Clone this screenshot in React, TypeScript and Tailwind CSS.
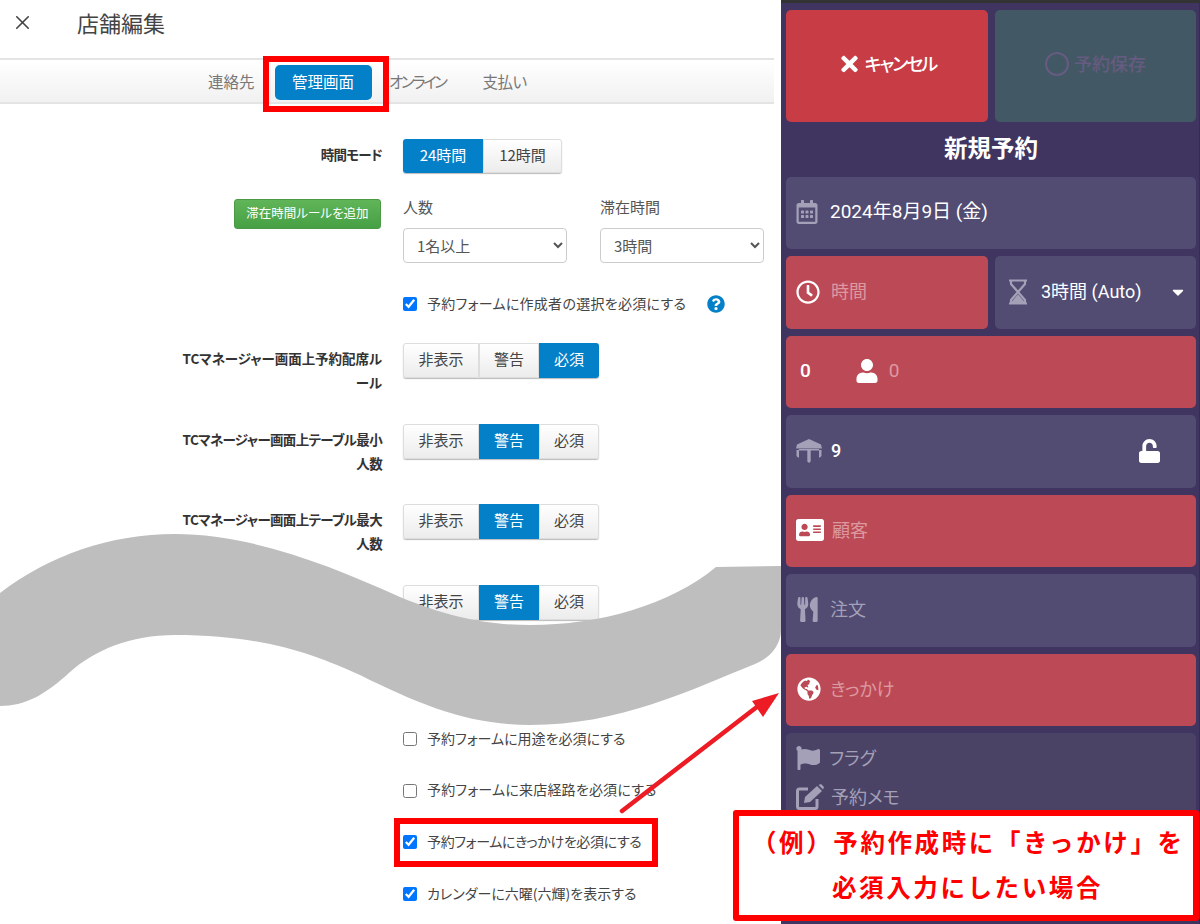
import {
  FaAddressCard,
  FaCaretDown,
  FaFlag,
  FaGlobeAmericas,
  FaQuestionCircle,
  FaRegCalendarAlt,
  FaRegClock,
  FaTimes,
  FaUnlock,
  FaUser,
  FaUtensils,
} from 'react-icons/fa';
import { X } from 'lucide-react';
import type { ReactNode } from 'react';

const OPTIONS = ['非表示', '警告', '必須'];

function Segmented({ active }: { active: number }) {
  return (
    <div className="flex h-[35px] w-[196px] rounded-[3px] text-[15px] shadow-[0_1px_1px_#bbb]">
      {OPTIONS.map((label, i) => (
        <div
          key={label}
          className={
            (i === 0 ? 'w-[76px] rounded-l-[3px] ' : i === 1 ? 'w-[60px] ' : 'w-[60px] rounded-r-[3px] ') +
            (i === active
              ? 'bg-[#0380c8] text-white '
              : 'border border-[#ddd] bg-gradient-to-b from-white to-[#ececec] text-[#444] ') +
            'flex items-center justify-center pb-[2px]'
          }
        >
          {label}
        </div>
      ))}
    </div>
  );
}

function RuleRow({ lines, active, tracking }: { lines: string[]; active: number; tracking?: string }) {
  return (
    <div className="flex h-[80.5px] gap-[21px]">
      <div className={'w-[200px] whitespace-nowrap pt-[3px] text-right text-[13.5px] font-bold leading-[24px] text-[#333] ' + (tracking ?? 'tracking-[-0.65px]')}>
        {lines.map(line => (
          <div key={line}>{line}</div>
        ))}
      </div>
      <Segmented active={active} />
    </div>
  );
}

function Check({ label, checked, className }: { label: string; checked?: boolean; className?: string }) {
  return (
    <label className={'flex h-[18px] items-center gap-[10px] pb-[2px] text-[14px] text-[#444] ' + (className ?? '')}>
      <input type="checkbox" checked={!!checked} readOnly className="mt-[2px] h-[14px] w-[14px] accent-[#0075ff]" />
      {label}
    </label>
  );
}

function Field({ children, red, className }: { children: ReactNode; red?: boolean; className?: string }) {
  return (
    <div
      className={
        (red ? 'bg-[#bc4a56] ' : 'bg-[#524b72] ') +
        'flex h-[72.3px] items-center rounded-[5px] pb-[2px] pl-[10px] text-[18px] ' +
        (className ?? '')
      }
    >
      {children}
    </div>
  );
}

function TableIcon() {
  return (
    <svg viewBox="0 0 26 24" className="h-[24px] w-[26px] fill-[#a3a0b8]">
      <path d="M13 0 25 5.500 26 9.500H0L1 5.500z" />
      <path d="M0.500 11H3V18.500H2L0.500 17zM23 11h2.500v6L24 18.500h-1zM11.300 11h3.400v11.500L13 24l-1.700-1.500z" />
      <path d="M3 10h20v1.500H3z" />
    </svg>
  );
}

function Hourglass() {
  return (
    <svg viewBox="0 0 20 26" className="h-[26px] w-[20px] fill-none stroke-[#a3a0b8] stroke-[2.2]">
      <path d="M1 1.500h18M1 24.500h18M3 2v3l7 8 7-8V2M3 24v-3l7-8 7 8v3" />
      <path d="M4.500 23.500 10 17l5.500 6.500z" className="fill-[#a3a0b8]" />
    </svg>
  );
}

function EditIcon() {
  return (
    <svg viewBox="0 0 28 26" className="h-[26px] w-[28px] fill-[#a3a0b8]">
      <path d="M12 5H3.500A2 2 0 0 0 1.500 7v15.500a2 2 0 0 0 2 2H19a2 2 0 0 0 2-2V15" fill="none" stroke="#a3a0b8" strokeWidth="3" />
      <path d="M9 13 21 2l5 5-12 11-6 1z" />
      <path d="M22.500 1 25 0l3 3-1 2.500z" />
    </svg>
  );
}

export default function App() {
  return (
    <div className="relative flex h-[924px] w-[1200px] overflow-hidden bg-white font-['Noto_Sans_CJK_JP',sans-serif] [font-feature-settings:'palt']">
      {/* settings form */}
      <div className="w-[781px] shrink-0">
        <div className="flex h-[58px] items-center pb-[14px]">
          <X size={23} strokeWidth={1.7} className="ml-[11px] text-[#444]" />
          <div className="ml-[43px] text-[22px] text-[#444]">店舗編集</div>
        </div>
        <div className="flex h-[46px] w-[774px] items-start gap-[20px] border-y-2 border-[#e4e4e4] bg-gradient-to-b from-white to-[#f1f1f1] pl-[208px] pt-[5px] text-[15.500px] text-[#777]">
          <div className="flex h-[33px] items-center">連絡先</div>
          <div className="flex h-[35px] w-[97px] items-center justify-center rounded-[5px] bg-[#0380c8] pb-[2px] text-white">管理画面</div>
          <div className="ml-[-2.500px] flex h-[33px] items-center tracking-[-2.5px]">オンライン</div>
          <div className="ml-[17px] flex h-[33px] items-center tracking-[-0.5px]">支払い</div>
        </div>

        <div className="ml-[182px] mt-[35px] flex h-[34px] gap-[21px]">
          <div className="w-[200px] text-right text-[13.500px] font-bold leading-[31px] tracking-[-0.7px] text-[#333]">時間モード</div>
          <div className="flex w-[159px] rounded-[3px] text-[15px] shadow-[0_1px_1px_#bbb]">
            <div className="flex w-[80px] items-center justify-center rounded-l-[3px] bg-[#0380c8] pb-[2px] text-white">24時間</div>
            <div className="flex w-[79px] items-center justify-center rounded-r-[3px] border border-[#ddd] bg-gradient-to-b from-white to-[#ececec] pb-[2px] text-[#444]">12時間</div>
          </div>
        </div>

        <div className="ml-[182px] mt-[26px] flex h-[64px] gap-[21px]">
          <div className="flex w-[199px] justify-end">
            <div className="flex h-[30px] w-[147px] items-center justify-center rounded-[3px] border border-[#4a9a44] bg-gradient-to-b from-[#60b558] to-[#47a045] pb-[1px] text-[12.500px] text-white">
              滞在時間ルールを追加
            </div>
          </div>
          <div className="ml-[1px] w-[176px]">
            <div className="h-[29px] text-[15px] leading-[16px] text-[#555]">人数</div>
            <select className="h-[35px] w-[164px] rounded-[4px] border border-[#ccc] pl-[9px] text-[15px] text-[#555]">
              <option>1名以上</option>
            </select>
          </div>
          <div className="w-[164px]">
            <div className="h-[29px] text-[15px] leading-[16px] text-[#555]">滞在時間</div>
            <select className="h-[35px] w-[164px] rounded-[4px] border border-[#ccc] pl-[9px] text-[15px] text-[#555]">
              <option>3時間</option>
            </select>
          </div>
        </div>

        <div className="ml-[403px] mt-[32px] flex h-[18px] items-center gap-[21px]">
          <Check checked label="予約フォームに作成者の選択を必須にする" className="tracking-[0.28px]" />
          <FaQuestionCircle className="h-[18px] w-[18px] text-[#0380c8]" />
        </div>

        <div className="ml-[182px] mt-[30px]">
          <RuleRow active={2} lines={['TCマネージャー画面上予約配席ル', 'ール']} tracking="tracking-[-0.05px]" />
          <RuleRow active={1} lines={['TCマネージャー画面上テーブル最小', '人数']} />
          <RuleRow active={1} lines={['TCマネージャー画面上テーブル最大', '人数']} />
          <RuleRow active={1} lines={[]} />
        </div>

        <div className="ml-[403px] mt-[65px] flex flex-col gap-[33.700px]">
          <Check label="予約フォームに用途を必須にする" />
          <Check label="予約フォームに来店経路を必須にする" className="tracking-[0.2px]" />
          <Check checked label="予約フォームにきっかけを必須にする" className="tracking-[-0.35px]" />
          <Check checked label="カレンダーに六曜(六輝)を表示する" />
        </div>
      </div>

      {/* reservation panel */}
      <div className="flex h-full w-[418px] flex-col bg-[#3f3560] font-['Roboto','Noto_Sans_CJK_JP',sans-serif]">
        <div className="h-[3px] shrink-0 bg-[#333]" />
        <div className="flex flex-1 flex-col pl-[5px] pr-[3px] pt-[7px] text-white">
          <div className="flex h-[112px] gap-[7px] text-[18px]">
            <div className="flex w-[202px] items-center justify-center gap-[6px] rounded-[5px] bg-[#c73c45] pb-[4px] pl-[2px] font-medium tracking-[-2px]">
              <FaTimes className="h-[24px] w-[19px]" />
              キャンセル
            </div>
            <div className="flex flex-1 items-center justify-center gap-[5px] rounded-[5px] bg-[#435865] pb-[4px] font-medium text-[#665b80]">
              <div className="h-[24px] w-[24px] rounded-full border-2 border-[#665b80]" />
              予約保存
            </div>
          </div>
          <div className="flex h-[55px] items-center justify-center text-[23.500px] font-bold">新規予約</div>
          <div className="flex flex-col gap-[7.200px]">
            <Field>
              <FaRegCalendarAlt className="h-[24px] w-[22px] text-[#a3a0b8]" />
              <span className="ml-[12px] text-[19px]">2024年8月9日 (金)</span>
            </Field>
            <div className="flex gap-[7px]">
              <Field red className="w-[202px]">
                <FaRegClock className="h-[24px] w-[24px] text-white" />
                <span className="ml-[11px] text-[#dd99a0]">時間</span>
              </Field>
              <Field className="flex-1 pl-[13px]">
                <Hourglass />
                <span className="ml-[13px]">3時間 (Auto)</span>
                <FaCaretDown className="ml-[30px] h-[18px] w-[12px]" />
              </Field>
            </div>
            <Field red className="pl-[14px] text-[19px]">
              <span className="font-medium">0</span>
              <FaUser className="ml-[45px] h-[24px] w-[22px]" />
              <span className="ml-[11px] text-[#dd99a0]">0</span>
            </Field>
            <Field>
              <TableIcon />
              <span className="ml-[9px] font-medium">9</span>
              <FaUnlock className="ml-[296px] h-[24px] w-[25px]" />
            </Field>
            <Field red className="pl-[8px]">
              <FaAddressCard className="h-[28px] w-[28px]" />
              <span className="ml-[8px] text-[#dd99a0]">顧客</span>
            </Field>
            <Field>
              <FaUtensils className="ml-[1px] h-[25px] w-[21px] text-[#a3a0b8]" />
              <span className="ml-[12px] text-[#a3a0b8]">注文</span>
            </Field>
            <Field red className="pl-[11px]">
              <FaGlobeAmericas className="h-[24px] w-[24px]" />
              <span className="ml-[9px] text-[#dd99a0]">きっかけ</span>
            </Field>
            <div className="flex h-[188px] flex-col rounded-[5px] bg-[#4a4366] pl-[10px] pt-[12px] text-[18px] text-[#a3a0b8]">
              <div className="flex h-[26px] items-center">
                <FaFlag className="h-[24px] w-[24px]" />
                <span className="ml-[9px]">フラグ</span>
              </div>
              <div className="mt-[13px] flex h-[26px] items-center">
                <EditIcon />
                <span className="ml-[7px]">予約メモ</span>
              </div>
            </div>
          </div>
        </div>
      </div>
      <div className="w-[1px] bg-[#333]" />

      {/* torn-page shape */}
      <svg viewBox="0 0 1200 924" className="pointer-events-none absolute left-0 top-0 h-[924px] w-[1200px]">
        <path
          fill="#bebebe"
          d="M0 593C50 555 110 534 175 534C250 534 330 565 400 597C450 618 490 625 530 625C600 625 670 605 716 567L781 566L781 630C781 645 770 658 755 664C690 690 620 725 530 725C470 725 420 705 360 675C315 655 265 635 175 635C130 635 95 650 70 672C45 695 25 706 0 706Z"
        />
      </svg>

      {/* annotations */}
      <div className="absolute left-[263px] top-[56px] h-[56px] w-[126px] border-[6px] border-[#ff0000]" />
      <div className="absolute left-[394px] top-[818px] h-[49px] w-[264px] border-[6px] border-[#ff0000]" />
      <svg viewBox="0 0 1200 924" className="pointer-events-none absolute left-0 top-0 h-[924px] w-[1200px]">
        <path d="M622 811 762 703" stroke="#ed1c24" strokeWidth="4.500" strokeLinecap="round" />
        <path d="M779 693 752 701 763 717Z" fill="#ed1c24" />
      </svg>
      <div className="absolute left-[733px] top-[810px] h-[111px] w-[466px] rounded-[3px] border-[6px] border-[#ff0000] bg-white pl-[13px] pt-[3px] text-[24.500px] font-bold leading-[45px] tracking-[2.600px] text-[#ff0000] [font-feature-settings:normal]">
        <div>（例）予約作成時に「きっかけ」を</div>
        <div className="pl-[80px]">必須入力にしたい場合</div>
      </div>
    </div>
  );
}
